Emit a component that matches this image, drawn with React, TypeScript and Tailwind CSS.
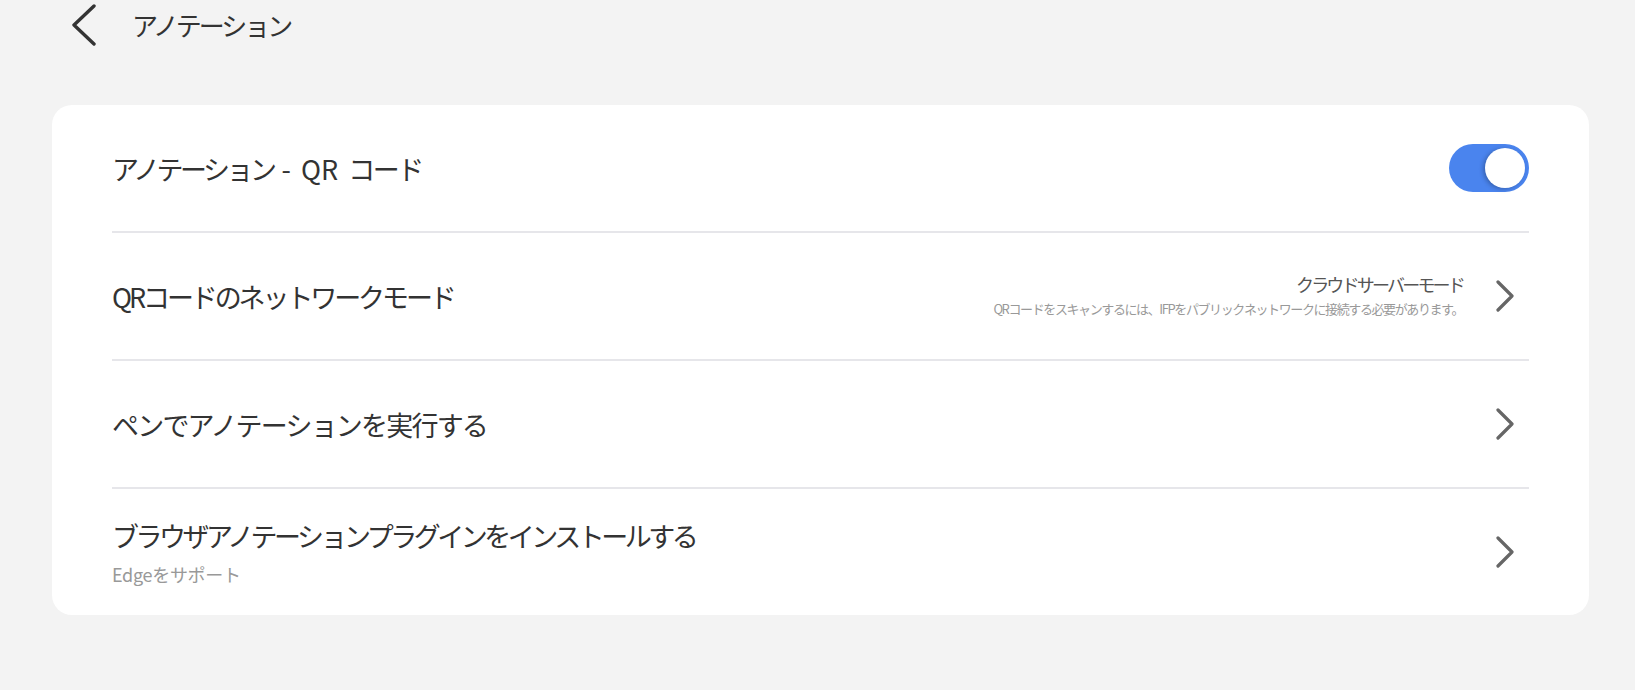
import { ReactNode } from 'react';

const font = { fontFamily: '"Noto Sans CJK JP", "Noto Sans", sans-serif' };

function Chevron() {
  return (
    <svg width="18" height="32" viewBox="0 0 18 32" className="shrink-0">
      <path d="M2 2 L16 16 L2 30" fill="none" stroke="#666666" strokeWidth="3.2" strokeLinecap="round" strokeLinejoin="round" />
    </svg>
  );
}

function Row({ children, right }: { children: ReactNode; right: ReactNode }) {
  return (
    <div className="h-[126px] flex items-center justify-between">
      <div className="flex flex-col">{children}</div>
      <div className="flex items-center">{right}</div>
    </div>
  );
}

export default function App() {
  return (
    <div className="w-[1635px] h-[690px] bg-[#f3f3f3] text-[#333333]" style={font}>
      {/* Header */}
      <div className="flex items-center h-[50px] pl-[71px]">
        <svg width="26" height="42" viewBox="0 0 26 42" className="shrink-0">
          <path d="M23 2 L3 21 L23 40" fill="none" stroke="#333333" strokeWidth="3.4" strokeLinecap="round" strokeLinejoin="round" />
        </svg>
        <span className="ml-[35px] text-[26px] tracking-[-3px] leading-none">アノテーション</span>
      </div>

      {/* Card */}
      <div className="mt-[55px] ml-[52px] w-[1537px] bg-white rounded-[20px] px-[60px]">
        <Row
          right={
            <div className="w-[80px] h-[48px] rounded-full bg-[#4a84ee] flex items-center justify-end pr-[4px]">
              <div className="w-[40px] h-[40px] rounded-full bg-white shadow-[-2px_1px_4px_rgba(0,0,0,0.25)]" />
            </div>
          }
        >
          <span className="text-[27px] leading-none whitespace-pre">
            <span className="tracking-[-3.5px]">アノテーション</span>
            <span className="tracking-[2px]"> - </span>
            <span>QR</span>
            <span className="tracking-[4px]"> </span>
            <span className="tracking-[-2.5px]">コード</span>
          </span>
        </Row>
        <div className="h-[2px] bg-[#e6e6ea]" />
        <Row
          right={
            <>
              <div className="flex flex-col items-end">
                <span className="text-[18px] tracking-[-2.8px] leading-none text-[#555555] mt-[-3px]">クラウドサーバーモード</span>
                <span className="text-[13px] tracking-[-1.4px] leading-none text-[#999999] mt-[9px]">
                  QRコードをスキャンするには、IFPをパブリックネットワークに接続する必要があります。
                </span>
              </div>
              <div className="ml-[33px] mr-[15px]">
                <Chevron />
              </div>
            </>
          }
        >
          <span className="text-[27px] tracking-[-3.1px] leading-none">QRコードのネットワークモード</span>
        </Row>
        <div className="h-[2px] bg-[#e6e6ea]" />
        <Row
          right={
            <div className="mr-[15px]">
              <Chevron />
            </div>
          }
        >
          <span className="text-[27px] tracking-[-1.8px] leading-none">ペンでアノテーションを実行する</span>
        </Row>
        <div className="h-[2px] bg-[#e6e6ea]" />
        <Row
          right={
            <div className="mr-[15px]">
              <Chevron />
            </div>
          }
        >
          <span className="text-[27px] tracking-[-3.5px] leading-none">ブラウザアノテーションプラグインをインストールする</span>
          <span className="text-[18px] tracking-[-0.3px] leading-none text-[#999999] mt-[16px]">Edgeをサポート</span>
        </Row>
      </div>
    </div>
  );
}
